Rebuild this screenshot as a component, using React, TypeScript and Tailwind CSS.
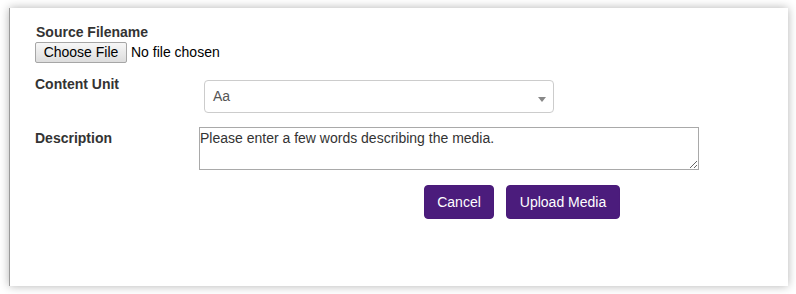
export default function App() {
  return (
    <div className="h-[294px] w-[796px] bg-white pt-[8px] pl-[9px] font-['Liberation_Sans',Arial,sans-serif] text-[14px] text-[#333]">
      <div className="h-[278px] w-[779px] border-l border-[#9a9a9a] bg-white pt-[14px] pl-[25px] shadow-[0_0_9px_rgba(0,0,0,0.3)]">
        {/* Source file */}
        <div className="pl-[1px] font-bold leading-[20px]">Source Filename</div>
        <div className="flex h-[21px] items-center">
          <div className="flex h-[21px] w-[92px] items-center justify-center rounded-[2px] border border-[#a6a6a6] bg-gradient-to-b from-[#f7f7f7] to-[#dddddd] text-black">
            Choose File
          </div>
          <span className="ml-[4px] text-black">No file chosen</span>
        </div>

        {/* Content unit */}
        <div className="mt-[11px] flex items-start">
          <div className="w-[169px] font-bold leading-[20px]">Content Unit</div>
          <div className="mt-[6px] flex h-[33px] w-[350px] items-center justify-between rounded-[4px] border border-[#cccccc] bg-white pr-[7px] pl-[8px] text-[#555]">
            <span>Aa</span>
            <svg width="8" height="5" viewBox="0 0 8 5" className="mt-[6px]">
              <path d="M0 0h8L4 5z" fill="#888" />
            </svg>
          </div>
        </div>

        {/* Description */}
        <div className="mt-[14px] flex items-start">
          <div className="mt-[1px] w-[164px] font-bold leading-[20px]">Description</div>
          <textarea
            className="h-[43px] w-[500px] border border-[#a9a9a9] px-0 pt-[2px] font-['Liberation_Sans',Arial,sans-serif] text-[14px] leading-[16px] text-[#333] outline-none"
            defaultValue="Please enter a few words describing the media."
          />
        </div>

        {/* Actions */}
        <div className="mt-[15px] ml-[389px] flex gap-[12px]">
          <button className="h-[34px] w-[70px] rounded-[4px] border border-[#4a1a7a] bg-[#4b1c7c] text-[14px] text-white">
            Cancel
          </button>
          <button className="h-[34px] w-[114px] rounded-[4px] border border-[#4a1a7a] bg-[#4b1c7c] text-[14px] text-white">
            Upload Media
          </button>
        </div>
      </div>
    </div>
  );
}
